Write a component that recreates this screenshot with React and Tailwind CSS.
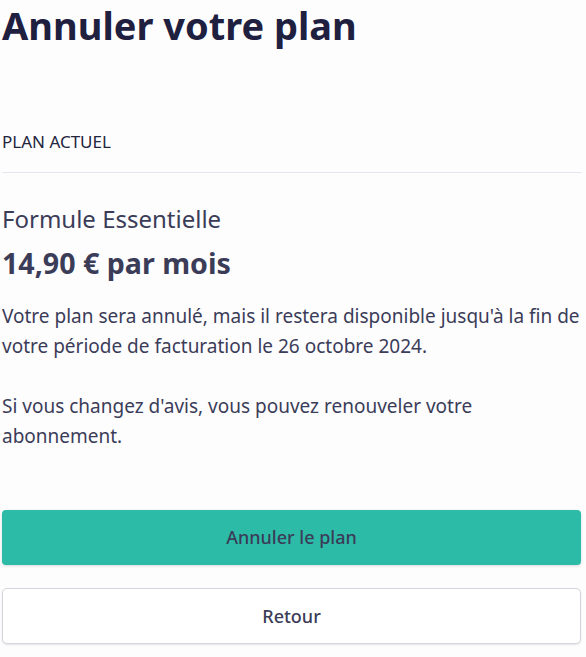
export default function App() {
  return (
    <div className="min-h-[657px] bg-[#fdfdfe] font-['Noto_Sans',sans-serif]">
      <div className="ml-[2px] w-[580px]">
        <h1 className="pt-[1px] text-[38px] font-bold leading-[48px] text-[#1f2040]">Annuler votre plan</h1>
        <div className="mt-[81px] text-[17px] leading-[24px] text-[#23243d]">PLAN ACTUEL</div>
        <div className="mt-[18px] h-px bg-[#e6e6ef]" />
        <div className="mt-[31px] text-[24px] leading-[30px] text-[#3b3c58]">Formule Essentielle</div>
        <div className="mt-[11px] text-[28.6px] font-bold leading-[36px] text-[#3b3c58]">14,90 € par mois</div>
        <p className="mt-[20px] text-[19px] leading-[30px] text-[#3b3c58]">
          Votre plan sera annulé, mais il restera disponible jusqu'à la fin de votre période de facturation le 26 octobre 2024.
        </p>
        <p className="mt-[30px] text-[19px] leading-[30px] text-[#3b3c58]">
          Si vous changez d'avis, vous pouvez renouveler votre abonnement.
        </p>
        <button className="mt-[59px] flex h-[55px] w-[579px] items-center justify-center rounded-[4px] bg-[#2bbba7] text-[18px] font-medium text-[#3b3c58] shadow-[0_1px_3px_rgba(0,0,0,0.15)]">
          Annuler le plan
        </button>
        <button className="mt-[23px] flex h-[56px] w-[579px] items-center justify-center rounded-[5px] border border-[#d4d4dc] bg-white text-[18px] font-medium text-[#3b3c58] shadow-[0_1px_2px_rgba(0,0,0,0.1)]">
          Retour
        </button>
      </div>
    </div>
  );
}
